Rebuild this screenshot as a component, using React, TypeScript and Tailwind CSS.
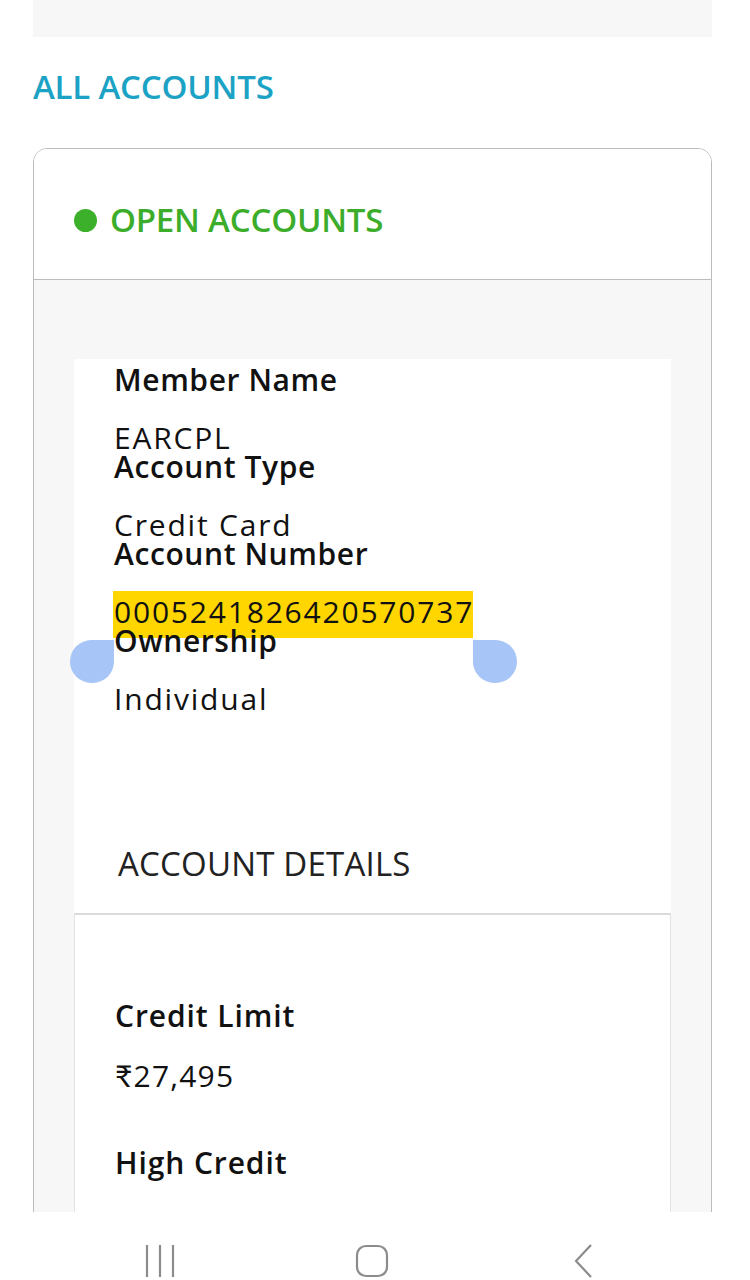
import React from "react";

const font = { fontFamily: "'Open Sans', Lato, sans-serif" };

function Field({ label, value, highlight }: { label: string; value: string; highlight?: boolean }) {
  return (
    <div>
      <div className="relative z-10 h-[29px] mb-[29px] text-[30px] leading-[29px] font-semibold text-[#111] tracking-[0.6px]">{label}</div>
      <div className="relative h-[29px] text-[30px] leading-[29px] text-[#111] tracking-[1.8px]">
        {highlight && <div className="absolute left-[-1px] top-[-6px] w-[360px] h-[47px] bg-[#ffd600]" />}
        <span className="relative z-10">{value}</span>
      </div>
    </div>
  );
}

export default function App() {
  return (
    <div className="w-[750px] h-[1280px] overflow-hidden bg-white flex flex-col" style={font}>
      <div className="h-[1212px] overflow-hidden">
        <div className="ml-[33px] w-[679px] h-[37px] bg-[#f7f7f7]" />
        <div className="h-[111px] px-[33px] pt-[32px] text-[33px] leading-[36px] font-semibold text-[#1ba2c4] tracking-[-0.2px]">
          ALL ACCOUNTS
        </div>
        <div className="ml-[33px] w-[679px] border border-[#bcbcbc] rounded-t-[14px] overflow-hidden">
          <div className="h-[131px] flex items-center pl-[40px] pt-[12px] border-b border-[#bcbcbc] bg-white">
            <div className="w-[23px] h-[23px] rounded-full bg-[#3cb02a] mr-[13px]" />
            <div className="text-[33px] leading-[36px] font-semibold text-[#3cad2a] tracking-[-0.2px]">OPEN ACCOUNTS</div>
          </div>
          <div className="bg-[#f7f7f7] px-[40px] pt-[79px] pb-[40px]">
            <div className="bg-white relative">
              <div className="pl-[40px] pt-[6px]">
                <Field label="Member Name" value="EARCPL" />
                <Field label="Account Type" value="Credit Card" />
                <Field label="Account Number" value="0005241826420570737" highlight />
                <Field label="Ownership" value="Individual" />
              </div>
              <div className="absolute left-[-4px] top-[281px] w-[44px] h-[43px] rounded-full rounded-tr-none bg-[#a7c5f6]" />
              <div className="absolute left-[399px] top-[281px] w-[44px] h-[43px] rounded-full rounded-tl-none bg-[#a7c5f6]" />
              <div className="h-[200px] pl-[44px] pt-[133px] text-[33px] leading-[36px] text-[#222] tracking-[0.2px]">
                ACCOUNT DETAILS
              </div>
              <div className="border border-[#e3e3e3] border-t-2 border-t-[#dadada] pl-[40px] pt-[86px] pb-[40px]">
                <div className="h-[30px] text-[30px] leading-[30px] font-semibold text-[#111] tracking-[0.9px]">Credit Limit</div>
                <div className="h-[30px] mt-[30px] text-[30px] leading-[30px] text-[#111] tracking-[1.2px]">₹27,495</div>
                <div className="h-[30px] mt-[57px] text-[30px] leading-[30px] font-semibold text-[#111] tracking-[0.9px]">High Credit</div>
                <div className="h-[30px] mt-[30px] text-[30px] leading-[30px] text-[#111] tracking-[1.2px]">₹27,495</div>
              </div>
            </div>
          </div>
        </div>
      </div>
      <div className="h-[68px] bg-white flex items-start pt-[32px] pl-[144px]">
        <svg width="32" height="34" viewBox="0 0 32 34">
          <line x1="3" y1="1" x2="3" y2="33" stroke="#8c8c8c" strokeWidth="2.2" />
          <line x1="16" y1="1" x2="16" y2="33" stroke="#8c8c8c" strokeWidth="2.2" />
          <line x1="29" y1="1" x2="29" y2="33" stroke="#8c8c8c" strokeWidth="2.2" />
        </svg>
        <svg width="34" height="34" viewBox="0 0 34 34" className="ml-[179px]">
          <rect x="2" y="2" width="30" height="30" rx="9" fill="none" stroke="#8c8c8c" strokeWidth="2.2" />
        </svg>
        <svg width="22" height="36" viewBox="0 0 22 36" className="ml-[183px] mt-[-1px]">
          <polyline points="19,2 4,18 19,34" fill="none" stroke="#8c8c8c" strokeWidth="2.2" strokeLinejoin="round" />
        </svg>
      </div>
    </div>
  );
}
